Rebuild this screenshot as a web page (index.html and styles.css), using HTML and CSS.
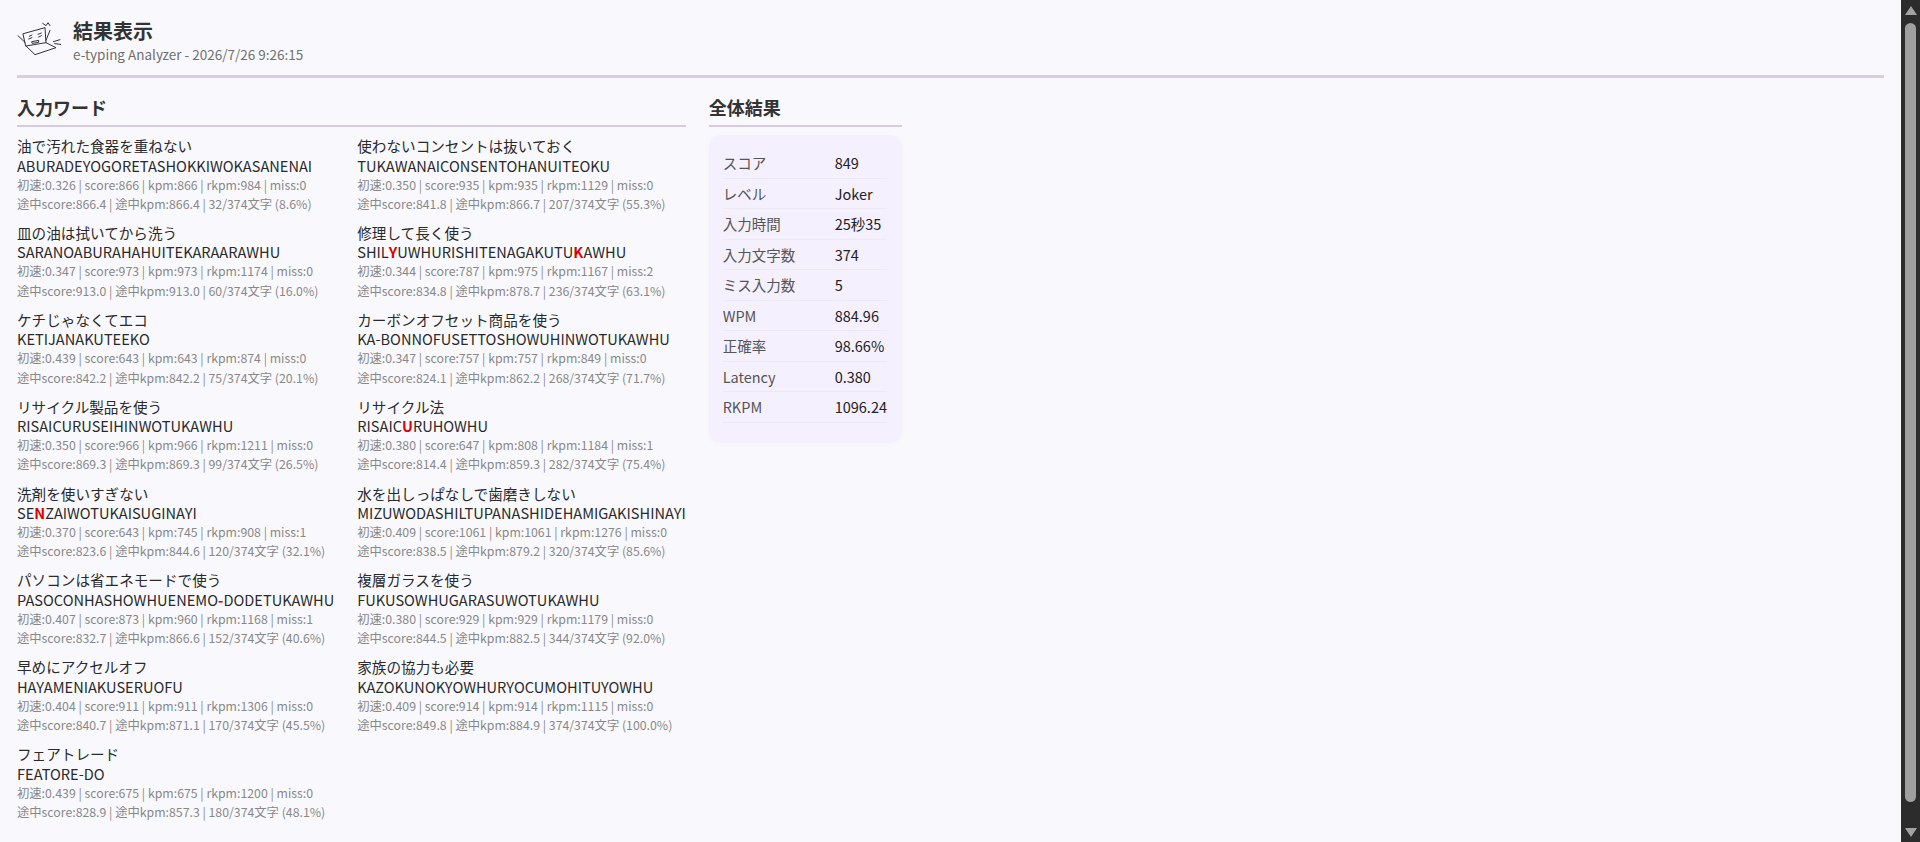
FILE: index.html
```html
<!DOCTYPE html>
<html lang="ja">
<head>
  <meta charset="UTF-8">
  <title>結果表示</title>
  <link rel="stylesheet" href="styles.css">
</head>
<body>
  <div class="page">
    <div class="header">
      <svg class="logo" width="45" height="38" viewBox="21 21 135 114" fill="none" stroke="#333" stroke-width="3" stroke-linecap="round" stroke-linejoin="round">
        <path d="M40 68L105 50L108 95L48 105Z"/>
        <path d="M48 105L75 131L138 110L108 95"/>
        <path d="M24 74L46 95M108 88L120 58M98 37L108 44L114 35L120 44"/>
        <path d="M58 76L66 72M56 84L66 80M84 70L94 66M86 78L94 74M66 92L86 88L86 94L68 97Z"/>
        <path d="M130 92L150 86M134 98L152 100"/>
      </svg>
      <div class="header-text">
        <h1>結果表示</h1>
        <div class="sub">e-typing Analyzer - 2026/7/26 9:26:15</div>
      </div>
    </div>

    <div class="content">
      <!-- 入力ワード -->
      <div class="words">
        <h2>入力ワード</h2>
        <div class="word-grid">
          <div class="word">
            <div class="jp">油で汚れた食器を重ねない</div>
            <div class="roma">ABURADEYOGORETASHOKKIWOKASANENAI</div>
            <div class="stat">初速:0.326 | score:866 | kpm:866 | rkpm:984 | miss:0</div>
            <div class="stat">途中score:866.4 | 途中kpm:866.4 | 32/374文字 (8.6%)</div>
          </div>
          <div class="word">
            <div class="jp">使わないコンセントは抜いておく</div>
            <div class="roma">TUKAWANAICONSENTOHANUITEOKU</div>
            <div class="stat">初速:0.350 | score:935 | kpm:935 | rkpm:1129 | miss:0</div>
            <div class="stat">途中score:841.8 | 途中kpm:866.7 | 207/374文字 (55.3%)</div>
          </div>
          <div class="word">
            <div class="jp">皿の油は拭いてから洗う</div>
            <div class="roma">SARANOABURAHAHUITEKARAARAWHU</div>
            <div class="stat">初速:0.347 | score:973 | kpm:973 | rkpm:1174 | miss:0</div>
            <div class="stat">途中score:913.0 | 途中kpm:913.0 | 60/374文字 (16.0%)</div>
          </div>
          <div class="word">
            <div class="jp">修理して長く使う</div>
            <div class="roma">SHIL<span class="miss">Y</span>UWHURISHITENAGAKUTU<span class="miss">K</span>AWHU</div>
            <div class="stat">初速:0.344 | score:787 | kpm:975 | rkpm:1167 | miss:2</div>
            <div class="stat">途中score:834.8 | 途中kpm:878.7 | 236/374文字 (63.1%)</div>
          </div>
          <div class="word">
            <div class="jp">ケチじゃなくてエコ</div>
            <div class="roma">KETIJANAKUTEEKO</div>
            <div class="stat">初速:0.439 | score:643 | kpm:643 | rkpm:874 | miss:0</div>
            <div class="stat">途中score:842.2 | 途中kpm:842.2 | 75/374文字 (20.1%)</div>
          </div>
          <div class="word">
            <div class="jp">カーボンオフセット商品を使う</div>
            <div class="roma">KA-BONNOFUSETTOSHOWUHINWOTUKAWHU</div>
            <div class="stat">初速:0.347 | score:757 | kpm:757 | rkpm:849 | miss:0</div>
            <div class="stat">途中score:824.1 | 途中kpm:862.2 | 268/374文字 (71.7%)</div>
          </div>
          <div class="word">
            <div class="jp">リサイクル製品を使う</div>
            <div class="roma">RISAICURUSEIHINWOTUKAWHU</div>
            <div class="stat">初速:0.350 | score:966 | kpm:966 | rkpm:1211 | miss:0</div>
            <div class="stat">途中score:869.3 | 途中kpm:869.3 | 99/374文字 (26.5%)</div>
          </div>
          <div class="word">
            <div class="jp">リサイクル法</div>
            <div class="roma">RISAIC<span class="miss">U</span>RUHOWHU</div>
            <div class="stat">初速:0.380 | score:647 | kpm:808 | rkpm:1184 | miss:1</div>
            <div class="stat">途中score:814.4 | 途中kpm:859.3 | 282/374文字 (75.4%)</div>
          </div>
          <div class="word">
            <div class="jp">洗剤を使いすぎない</div>
            <div class="roma">SE<span class="miss">N</span>ZAIWOTUKAISUGINAYI</div>
            <div class="stat">初速:0.370 | score:643 | kpm:745 | rkpm:908 | miss:1</div>
            <div class="stat">途中score:823.6 | 途中kpm:844.6 | 120/374文字 (32.1%)</div>
          </div>
          <div class="word">
            <div class="jp">水を出しっぱなしで歯磨きしない</div>
            <div class="roma">MIZUWODASHILTUPANASHIDEHAMIGAKISHINAYI</div>
            <div class="stat">初速:0.409 | score:1061 | kpm:1061 | rkpm:1276 | miss:0</div>
            <div class="stat">途中score:838.5 | 途中kpm:879.2 | 320/374文字 (85.6%)</div>
          </div>
          <div class="word">
            <div class="jp">パソコンは省エネモードで使う</div>
            <div class="roma">PASOCONHASHOWHUENEMO<span class="miss">-</span>DODETUKAWHU</div>
            <div class="stat">初速:0.407 | score:873 | kpm:960 | rkpm:1168 | miss:1</div>
            <div class="stat">途中score:832.7 | 途中kpm:866.6 | 152/374文字 (40.6%)</div>
          </div>
          <div class="word">
            <div class="jp">複層ガラスを使う</div>
            <div class="roma">FUKUSOWHUGARASUWOTUKAWHU</div>
            <div class="stat">初速:0.380 | score:929 | kpm:929 | rkpm:1179 | miss:0</div>
            <div class="stat">途中score:844.5 | 途中kpm:882.5 | 344/374文字 (92.0%)</div>
          </div>
          <div class="word">
            <div class="jp">早めにアクセルオフ</div>
            <div class="roma">HAYAMENIAKUSERUOFU</div>
            <div class="stat">初速:0.404 | score:911 | kpm:911 | rkpm:1306 | miss:0</div>
            <div class="stat">途中score:840.7 | 途中kpm:871.1 | 170/374文字 (45.5%)</div>
          </div>
          <div class="word">
            <div class="jp">家族の協力も必要</div>
            <div class="roma">KAZOKUNOKYOWHURYOCUMOHITUYOWHU</div>
            <div class="stat">初速:0.409 | score:914 | kpm:914 | rkpm:1115 | miss:0</div>
            <div class="stat">途中score:849.8 | 途中kpm:884.9 | 374/374文字 (100.0%)</div>
          </div>
          <div class="word">
            <div class="jp">フェアトレード</div>
            <div class="roma">FEATORE-DO</div>
            <div class="stat">初速:0.439 | score:675 | kpm:675 | rkpm:1200 | miss:0</div>
            <div class="stat">途中score:828.9 | 途中kpm:857.3 | 180/374文字 (48.1%)</div>
          </div>
        </div>
      </div>

      <!-- 全体結果 -->
      <div class="summary">
        <h2>全体結果</h2>
        <div class="card">
          <table>
            <tr><th>スコア</th><td>849</td></tr>
            <tr><th>レベル</th><td>Joker</td></tr>
            <tr><th>入力時間</th><td>25秒35</td></tr>
            <tr><th>入力文字数</th><td>374</td></tr>
            <tr><th>ミス入力数</th><td>5</td></tr>
            <tr><th>WPM</th><td>884.96</td></tr>
            <tr><th>正確率</th><td>98.66%</td></tr>
            <tr><th>Latency</th><td>0.380</td></tr>
            <tr><th>RKPM</th><td>1096.24</td></tr>
          </table>
        </div>
      </div>
    </div>
  </div>

  <div class="scrollbar">
    <div class="arrow-up"></div>
    <div class="thumb"></div>
    <div class="arrow-down"></div>
  </div>
</body>
</html>
```

FILE: styles.css
```css
html, body {
  height: 100%;
}
body {
  margin: 0;
  display: flex;
  overflow: hidden;
  background: #f9f9fd;
  color: #333;
  font-family: "Noto Sans CJK JP", sans-serif;
}
.page {
  flex: 1;
  min-width: 0;
  padding: 17px 17px 0;
}
.header {
  display: flex;
  align-items: center;
  gap: 11px;
  height: 45px;
  padding-bottom: 13px;
  border-bottom: 3px solid #d9cbe9;
}
.logo {
  flex: none;
  align-self: flex-start;
  margin-top: 1px;
}
.header-text {
  padding-top: 2px;
}
h1 {
  margin: 0;
  font-size: 20px;
  line-height: 28px;
  color: #333;
}
.sub {
  font-size: 13.5px;
  line-height: 19px;
  color: #707070;
}
.content {
  display: flex;
  align-items: flex-start;
  gap: 23px;
  margin-top: 16px;
}
h2 {
  margin: 0 0 8px;
  padding-bottom: 4px;
  font-size: 18px;
  line-height: 27px;
  color: #333;
  border-bottom: 2px solid #d6c9e2;
}
.word-grid {
  display: grid;
  grid-template-columns: max-content max-content;
  column-gap: 23px;
  row-gap: 7.9px;
}
.jp, .roma {
  font-size: 14.6px;
  color: #2a2a2a;
}
.jp {
  padding-top: 1px;
  margin-bottom: -1px;
  line-height: 20.5px;
}
.roma {
  line-height: 20px;
}
.stat {
  font-size: 12.3px;
  line-height: 19.25px;
  color: #888;
}
.miss {
  color: #d00;
  font-weight: bold;
}
.card {
  padding: 13px 15px 20px 14px;
  background: #f5f0fe;
  border-radius: 12px;
  box-shadow: 0 2px 8px rgba(0,0,0,0.02);
}
table {
  border-collapse: collapse;
  font-size: 14.5px;
}
th, td {
  height: 29.5px;
  padding: 0;
  border-bottom: 1px solid #ece8f4;
  text-align: left;
  font-weight: normal;
}
th {
  width: 112px;
  color: #555;
}
td {
  color: #222;
}

/* スクロールバー */
.scrollbar {
  flex: none;
  width: 19px;
  height: 100%;
  box-sizing: border-box;
  display: flex;
  flex-direction: column;
  align-items: center;
  padding: 6px 0 5px;
  background: #2c2c2c;
}
.arrow-up, .arrow-down {
  flex: none;
  width: 0;
  height: 0;
  border-left: 6.5px solid transparent;
  border-right: 6.5px solid transparent;
}
.arrow-up {
  border-bottom: 9px solid #a3a3a3;
}
.arrow-down {
  border-top: 9px solid #a3a3a3;
}
.thumb {
  flex: 1;
  width: 11px;
  margin: 8px 0 26px;
  border-radius: 6px;
  background: #9f9f9f;
}
```
